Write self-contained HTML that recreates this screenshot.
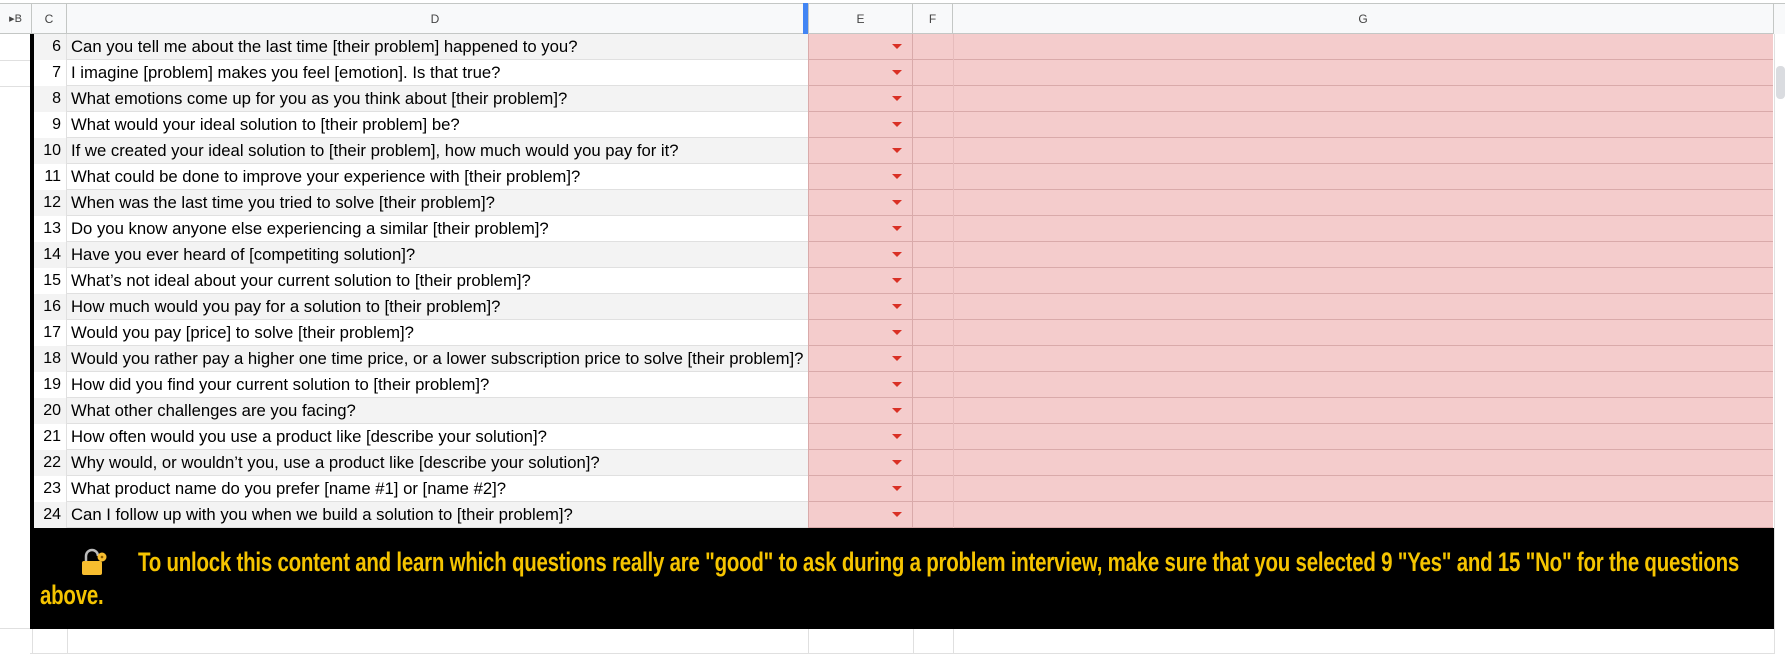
<!DOCTYPE html>
<html><head><meta charset="utf-8"><style>
*{margin:0;padding:0;box-sizing:border-box}
body{width:1785px;height:654px;background:#fff;position:relative;overflow:hidden;font-family:"Liberation Sans",Arial,sans-serif}
.a{position:absolute}
.hdr{top:3px;height:31px;background:#f8f9fa;border-top:1px solid #c4c7c5;border-bottom:1px solid #c4c7c5;color:#444;font-size:12px;display:flex;align-items:center;justify-content:center}
.row{position:absolute;left:34px;height:26px;width:1739px}
.row .n{position:absolute;left:0;width:33px;height:26px;text-align:right;padding-right:5px;font-size:16px;line-height:26px;color:#000;border-right:1px solid #e0e0e0}
.row .t{position:absolute;left:33px;width:741px;height:26px;font-size:16.7px;line-height:26px;padding-left:4px;color:#000;white-space:nowrap;border-bottom:1px solid #e0e0e0}
.row .e{position:absolute;left:774px;width:105px;height:26px;background:#f4cccc;border-left:1px solid #d9aaaa;border-right:1px solid #d9aaaa;border-bottom:1px solid #d9aaaa}
.row .e:after{content:"";position:absolute;right:10px;top:10px;border-left:5px solid transparent;border-right:5px solid transparent;border-top:5px solid #d93025}
.row .g{position:absolute;left:879px;width:860px;height:26px;background:#f4cccc;border-bottom:1px solid #d9aaaa}
.row .g:before{content:"";position:absolute;left:40px;top:0;height:26px;border-left:1px solid #e6bcbc}
.gr .n,.gr .t{background:#f3f3f3}
.wh .n,.wh .t{background:#fff}
.bt{position:absolute;white-space:nowrap;font-size:27px;font-weight:bold;color:#f5c400;transform-origin:0 0;transform:scaleX(0.758);letter-spacing:-0.3px}
</style></head><body>
<div class="a hdr" style="left:0;width:32px;border-right:1px solid #c4c7c5;font-size:11px">&#9656;B</div>
<div class="a hdr" style="left:32px;width:35px;border-right:1px solid #c4c7c5">C</div>
<div class="a hdr" style="left:67px;width:736px">D</div>
<div class="a" style="left:803px;top:3px;width:5px;height:31px;background:#4285f4"></div>
<div class="a hdr" style="left:808px;width:105px;border-left:1px solid #c4c7c5;border-right:1px solid #c4c7c5">E</div>
<div class="a hdr" style="left:913px;width:40px;border-right:1px solid #c4c7c5">F</div>
<div class="a hdr" style="left:953px;width:821px;border-right:1px solid #c4c7c5">G</div>
<div class="a" style="left:1774px;top:3px;width:11px;height:31px;background:#f8f9fa;border-top:1px solid #c4c7c5"></div>
<div class="a" style="left:1776px;top:66px;width:9px;height:33px;background:#dadce0;border-radius:4px"></div>
<div class="a" style="left:1774px;top:34px;width:1px;height:620px;background:#e0e0e0"></div>
<div class="a" style="left:0;top:34px;width:30px;height:620px;background:#fff"></div>
<div class="a" style="left:0;top:60px;width:30px;height:1px;background:#e0e0e0"></div>
<div class="a" style="left:0;top:86px;width:30px;height:1px;background:#e0e0e0"></div>
<div class="a" style="left:0;top:628px;width:30px;height:1px;background:#e0e0e0"></div>
<div class="a" style="left:30px;top:34px;width:4px;height:494px;background:#000"></div>

<div class="row gr" style="top:34px"><div class="n">6</div><div class="t">Can you tell me about the last time [their problem] happened to you?</div><div class="e"></div><div class="g"></div></div>
<div class="row wh" style="top:60px"><div class="n">7</div><div class="t">I imagine [problem] makes you feel [emotion]. Is that true?</div><div class="e"></div><div class="g"></div></div>
<div class="row gr" style="top:86px"><div class="n">8</div><div class="t">What emotions come up for you as you think about [their problem]?</div><div class="e"></div><div class="g"></div></div>
<div class="row wh" style="top:112px"><div class="n">9</div><div class="t">What would your ideal solution to [their problem] be?</div><div class="e"></div><div class="g"></div></div>
<div class="row gr" style="top:138px"><div class="n">10</div><div class="t">If we created your ideal solution to [their problem], how much would you pay for it?</div><div class="e"></div><div class="g"></div></div>
<div class="row wh" style="top:164px"><div class="n">11</div><div class="t">What could be done to improve your experience with [their problem]?</div><div class="e"></div><div class="g"></div></div>
<div class="row gr" style="top:190px"><div class="n">12</div><div class="t">When was the last time you tried to solve [their problem]?</div><div class="e"></div><div class="g"></div></div>
<div class="row wh" style="top:216px"><div class="n">13</div><div class="t">Do you know anyone else experiencing a similar [their problem]?</div><div class="e"></div><div class="g"></div></div>
<div class="row gr" style="top:242px"><div class="n">14</div><div class="t">Have you ever heard of [competiting solution]?</div><div class="e"></div><div class="g"></div></div>
<div class="row wh" style="top:268px"><div class="n">15</div><div class="t">What’s not ideal about your current solution to [their problem]?</div><div class="e"></div><div class="g"></div></div>
<div class="row gr" style="top:294px"><div class="n">16</div><div class="t">How much would you pay for a solution to [their problem]?</div><div class="e"></div><div class="g"></div></div>
<div class="row wh" style="top:320px"><div class="n">17</div><div class="t">Would you pay [price] to solve [their problem]?</div><div class="e"></div><div class="g"></div></div>
<div class="row gr" style="top:346px"><div class="n">18</div><div class="t">Would you rather pay a higher one time price, or a lower subscription price to solve [their problem]?</div><div class="e"></div><div class="g"></div></div>
<div class="row wh" style="top:372px"><div class="n">19</div><div class="t">How did you find your current solution to [their problem]?</div><div class="e"></div><div class="g"></div></div>
<div class="row gr" style="top:398px"><div class="n">20</div><div class="t">What other challenges are you facing?</div><div class="e"></div><div class="g"></div></div>
<div class="row wh" style="top:424px"><div class="n">21</div><div class="t">How often would you use a product like [describe your solution]?</div><div class="e"></div><div class="g"></div></div>
<div class="row gr" style="top:450px"><div class="n">22</div><div class="t">Why would, or wouldn’t you, use a product like [describe your solution]?</div><div class="e"></div><div class="g"></div></div>
<div class="row wh" style="top:476px"><div class="n">23</div><div class="t">What product name do you prefer [name #1] or [name #2]?</div><div class="e"></div><div class="g"></div></div>
<div class="row gr" style="top:502px"><div class="n">24</div><div class="t">Can I follow up with you when we build a solution to [their problem]?</div><div class="e"></div><div class="g"></div></div>

<div class="a" style="left:30px;top:528px;width:1744px;height:101px;background:#000"></div>
<svg class="a" style="left:80px;top:548px" width="28" height="28" viewBox="0 0 28 28">
<path d="M6 13 V8 a6 6 0 0 1 12 0" fill="none" stroke="#bbb" stroke-width="2.5"/>
<rect x="2" y="13" width="20" height="14" rx="2" fill="#f7bd2f"/>
<circle cx="22" cy="9" r="4.5" fill="#f7bd2f"/><circle cx="22" cy="9" r="1.3" fill="#8a5a00"/>
</svg>
<div class="bt" style="left:138px;top:547px">To unlock this content and learn which questions really are "good" to ask during a problem interview, make sure that you selected 9 "Yes" and 15 "No" for the questions</div>
<div class="bt" style="left:40px;top:580px">above.</div>

<div class="a" style="left:30px;top:653px;width:1744px;height:1px;background:#e0e0e0"></div>
<div class="a" style="left:32px;top:629px;width:1px;height:25px;background:#e0e0e0"></div>
<div class="a" style="left:67px;top:629px;width:1px;height:25px;background:#e0e0e0"></div>
<div class="a" style="left:808px;top:629px;width:1px;height:25px;background:#e0e0e0"></div>
<div class="a" style="left:913px;top:629px;width:1px;height:25px;background:#e0e0e0"></div>
<div class="a" style="left:953px;top:629px;width:1px;height:25px;background:#e0e0e0"></div>
</body></html>
